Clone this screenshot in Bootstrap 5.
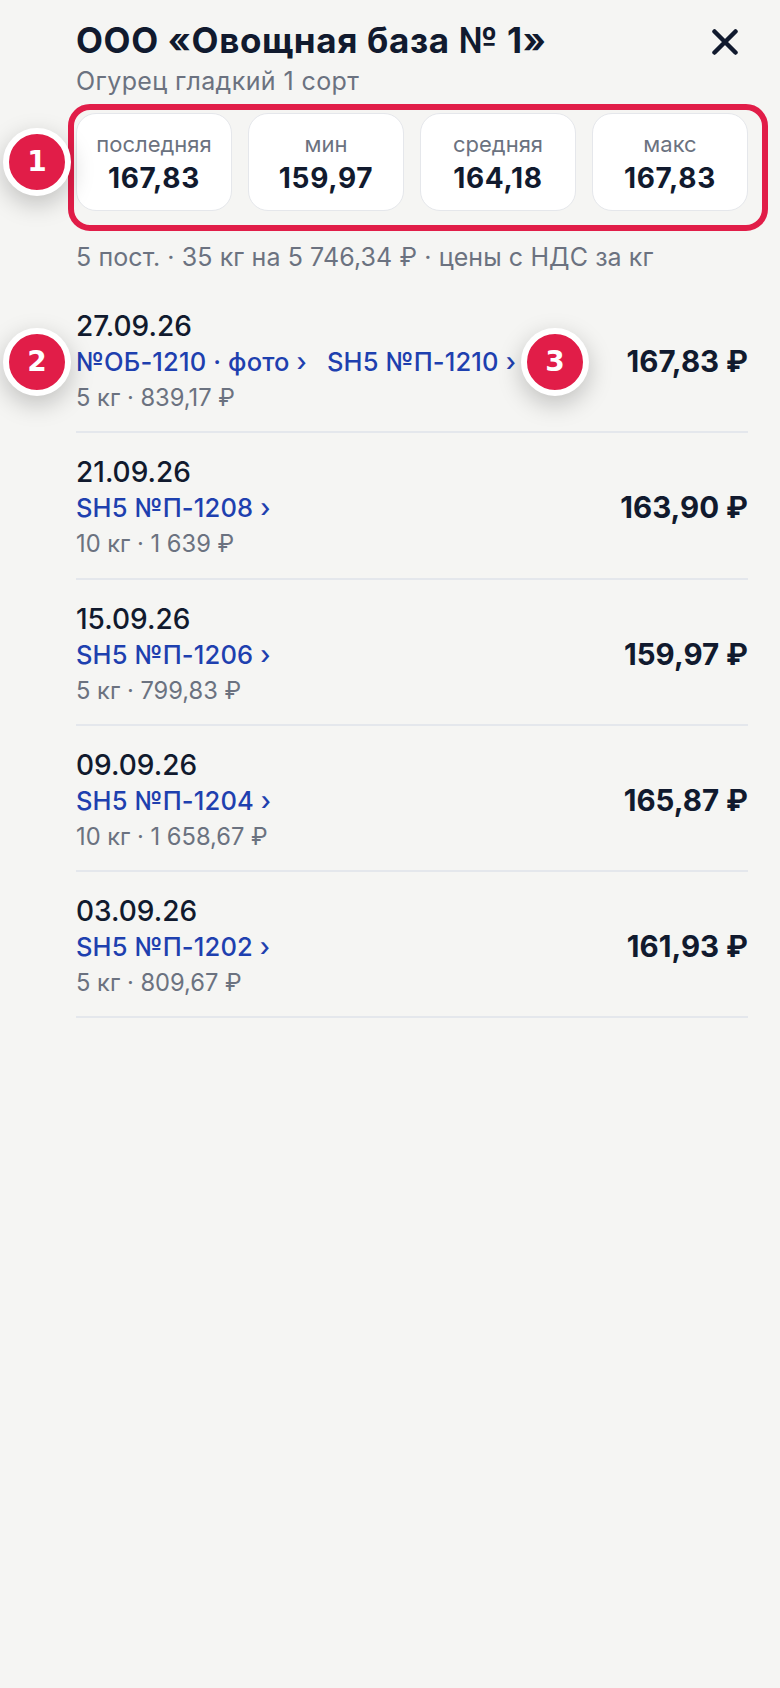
<!DOCTYPE html>
<html lang="ru">
<head>
    <meta charset="UTF-8">
    <title>Цены поставщика</title>
    <link href="https://cdn.jsdelivr.net/npm/bootstrap@5.3.0/dist/css/bootstrap.min.css" rel="stylesheet">
    <style>
        body { background: #f5f5f3; font-family: Inter, "Noto Sans", sans-serif; color: #111a2e; }
        .sheet { position: relative; width: 780px; height: 1688px; padding: 16px 32px 0 76px; }
        .sheet-title { font-size: 35px; font-weight: 700; line-height: 48px; margin: 0; letter-spacing: .65px; white-space: nowrap; }
        .close-icon { width: 26px; height: 26px; margin-right: 10px; margin-top: 13px; }
        .sheet-sub { font-size: 25px; line-height: 34px; color: #6b7280; letter-spacing: .4px; }
        .stat-row { margin-top: 15px; gap: 16px; }
        .stat-box { width: 156px; height: 98px; background: #fff; border: 1px solid #e5e7eb; border-radius: 20px; text-align: center; padding-top: 17px; }
        .stat-label { font-size: 22px; line-height: 26px; color: #6b7280; }
        .stat-val { font-size: 28px; line-height: 42px; font-weight: 700; letter-spacing: .7px; }
        .sheet-note { font-size: 25px; line-height: 34px; color: #6b7280; margin-top: 29px; margin-bottom: 13px; letter-spacing: .1px; }
        .deal { height: 146.25px; border-bottom: 2px solid #e4e7ec; padding-top: 21px; }
        .deal-date { font-size: 28px; line-height: 36px; font-weight: 500; }
        .deal-links { font-size: 25.5px; line-height: 36px; font-weight: 500; color: #1e40af; gap: 20px; letter-spacing: .15px; }
        .deal-sub { font-size: 23.7px; line-height: 35px; color: #6b7280; }
        .deal-price { font-size: 29.5px; font-weight: 700; line-height: 36px; margin-top: 35px; }
        .mark-box { position: absolute; left: 68px; top: 104px; width: 700px; height: 127px; border: 6px solid #e11d48; border-radius: 22px; }
        .num-pin { position: absolute; width: 68px; height: 68px; border-radius: 50%; background: #e11d48; border: 6px solid #fff; color: #fff; font-family: "DejaVu Sans", sans-serif; font-size: 28px; font-weight: 700; box-shadow: 0 8px 24px rgba(0,0,0,.22); }
    </style>
</head>
<body>
<div class="sheet">
    <div class="d-flex justify-content-between align-items-start">
        <h1 class="sheet-title">ООО «Овощная база № 1»</h1>
        <svg class="close-icon" viewBox="0 0 26 26" fill="none" stroke="#111a2e" stroke-width="4.5" stroke-linecap="round"><path d="M2.5 2.5 L23.5 23.5 M23.5 2.5 L2.5 23.5"/></svg>
    </div>
    <div class="sheet-sub">Огурец гладкий 1 сорт</div>

    <div class="d-flex stat-row" id="stats"></div>
    <div class="sheet-note">5 пост. · 35 кг на 5 746,34 ₽ · цены с НДС за кг</div>

    <div id="deals"></div>

    <!-- пометки поверх экрана -->
    <div class="mark-box"></div>
    <div class="num-pin d-flex align-items-center justify-content-center" style="left:3px;top:128px">1</div>
    <div class="num-pin d-flex align-items-center justify-content-center" style="left:3px;top:328px">2</div>
    <div class="num-pin d-flex align-items-center justify-content-center" style="left:521px;top:328px">3</div>
</div>

<script>
    const stats = [['последняя', '167,83'], ['мин', '159,97'], ['средняя', '164,18'], ['макс', '167,83']];
    document.getElementById('stats').innerHTML = stats.map(s =>
        `<div class="stat-box"><div class="stat-label">${s[0]}</div><div class="stat-val">${s[1]}</div></div>`).join('');

    const deals = [
        {date: '27.09.26', links: ['№ОБ-1210 · фото ›', 'SH5 №П-1210 ›'], sub: '5 кг · 839,17 ₽', price: '167,83 ₽'},
        {date: '21.09.26', links: ['SH5 №П-1208 ›'], sub: '10 кг · 1 639 ₽', price: '163,90 ₽'},
        {date: '15.09.26', links: ['SH5 №П-1206 ›'], sub: '5 кг · 799,83 ₽', price: '159,97 ₽'},
        {date: '09.09.26', links: ['SH5 №П-1204 ›'], sub: '10 кг · 1 658,67 ₽', price: '165,87 ₽'},
        {date: '03.09.26', links: ['SH5 №П-1202 ›'], sub: '5 кг · 809,67 ₽', price: '161,93 ₽'}
    ];
    document.getElementById('deals').innerHTML = deals.map(d => `
        <div class="deal d-flex justify-content-between">
            <div>
                <div class="deal-date">${d.date}</div>
                <div class="deal-links d-flex">${d.links.map(l => `<span>${l}</span>`).join('')}</div>
                <div class="deal-sub">${d.sub}</div>
            </div>
            <div class="deal-price">${d.price}</div>
        </div>`).join('');
</script>
<script src="https://cdn.jsdelivr.net/npm/bootstrap@5.3.0/dist/js/bootstrap.bundle.min.js"></script>
</body>
</html>
